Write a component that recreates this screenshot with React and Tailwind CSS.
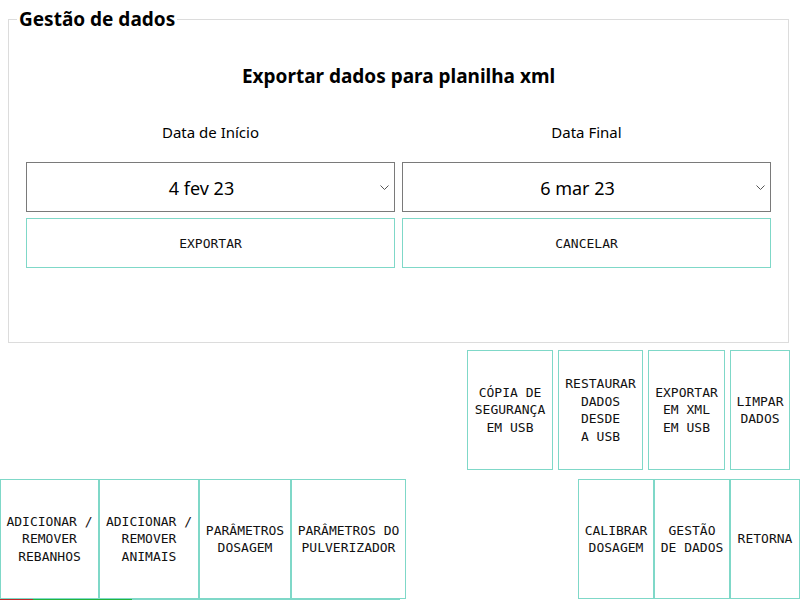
import React from "react";

const mono = { fontFamily: '"DejaVu Sans Mono", "Liberation Mono", monospace' };

function Chevron() {
  return (
    <svg width="9" height="6" viewBox="0 0 9 6" className="absolute right-[5px] top-[22px]">
      <path d="M0.5 0.5 L4.5 4.5 L8.5 0.5" fill="none" stroke="#555" strokeWidth="1" />
    </svg>
  );
}

function Combo({ value }) {
  return (
    <div className="relative w-[369px] h-[50px] border border-[#7a7a7a] flex items-center justify-center text-[18px] text-black">
      <span className="-ml-[18px] mt-[2px]">{value}</span>
      <Chevron />
    </div>
  );
}

function WideBtn({ label }) {
  return (
    <div
      className="w-[369px] h-[50px] border border-[#7fd8c8] flex items-center justify-center text-[13px] text-[#111]"
      style={mono}
    >
      <span className="mt-[1px]">{label}</span>
    </div>
  );
}

function TileBtn({ lines, w }) {
  return (
    <div
      className="h-[120px] border border-[#7fd8c8] flex flex-col items-center justify-center text-center text-[13px] leading-[17.5px] text-[#111] whitespace-pre"
      style={{ ...mono, width: w }}
    >
      {lines.map((l, i) => (
        <div key={i}>{l}</div>
      ))}
    </div>
  );
}

export default function App() {
  return (
    <div
      className="w-[800px] h-[600px] bg-white overflow-hidden flex flex-col"
      style={{ fontFamily: '"Noto Sans", "Open Sans", sans-serif' }}
    >
      <div className="relative mt-[19px] ml-[8px] w-[781px] h-[324px] border border-[#dcdcdc] flex flex-col items-center">
        <span className="absolute left-[8px] -top-[14px] bg-white px-[2px] text-[19px] leading-[26px] font-bold text-black">
          Gestão de dados
        </span>
        <div className="mt-[42px] text-[19px] leading-[28px] font-bold text-black">
          Exportar dados para planilha xml
        </div>
        <div className="mt-[30px] flex gap-[7px]">
          <div className="w-[369px] text-center text-[15px] leading-[24px] text-black">Data de Início</div>
          <div className="w-[369px] text-center text-[15px] leading-[24px] text-black">Data Final</div>
        </div>
        <div className="mt-[18px] flex gap-[7px]">
          <Combo value="4 fev 23" />
          <Combo value="6 mar 23" />
        </div>
        <div className="mt-[6px] flex gap-[7px]">
          <WideBtn label="EXPORTAR" />
          <WideBtn label="CANCELAR" />
        </div>
      </div>

      <div className="mt-[7px] flex justify-end gap-[5px] pr-[10px]">
        <TileBtn w={86} lines={["CÓPIA DE", "SEGURANÇA", "EM USB"]} />
        <TileBtn w={85} lines={["RESTAURAR", "DADOS", "DESDE", "A USB"]} />
        <TileBtn w={77} lines={["EXPORTAR", "EM XML", "EM USB"]} />
        <TileBtn w={60} lines={["LIMPAR", "DADOS"]} />
      </div>

      <div className="mt-[9px] flex">
        <div className="flex">
          <TileBtn w={99} lines={["ADICIONAR /", "REMOVER", "REBANHOS"]} />
          <TileBtn w={100} lines={["ADICIONAR /", "REMOVER", "ANIMAIS"]} />
          <TileBtn w={92} lines={["PARÂMETROS", "DOSAGEM"]} />
          <TileBtn w={115} lines={["PARÂMETROS DO", "PULVERIZADOR"]} />
        </div>
        <div className="ml-auto flex">
          <TileBtn w={76} lines={["CALIBRAR", "DOSAGEM"]} />
          <TileBtn w={76} lines={["GESTÃO", "DE DADOS"]} />
          <TileBtn w={70} lines={["RETORNA"]} />
        </div>
      </div>

      <div className="flex h-[1px]">
        <div className="w-[33px] bg-[#c0282a]" />
        <div className="w-[99px] bg-[#22b43c]" />
        <div className="w-[268px] bg-[#7fd8c8]" />
      </div>
    </div>
  );
}
